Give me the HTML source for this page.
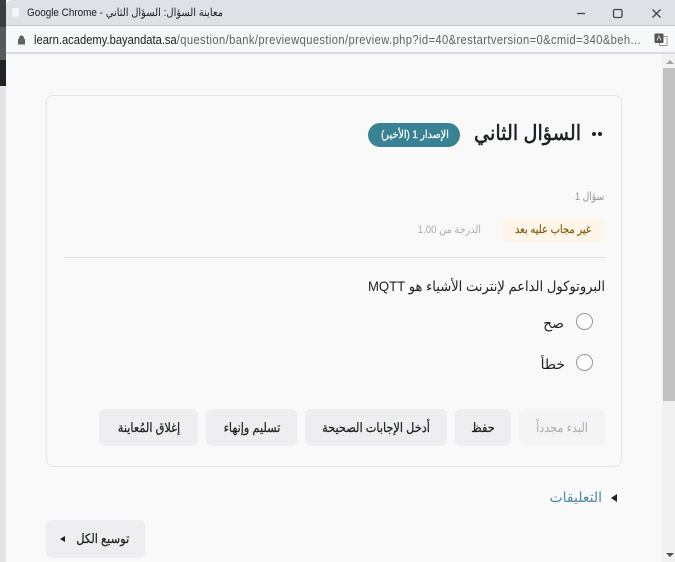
<!DOCTYPE html>
<html lang="ar"><head><meta charset="utf-8">
<style>
html,body{margin:0;padding:0;width:675px;height:562px;overflow:hidden;background:#f9f9fa;font-family:"Liberation Sans","Noto Sans CJK SC",sans-serif;}
.a{position:absolute;white-space:nowrap;}
.r{direction:rtl;}
.btn{position:absolute;top:409px;height:37px;background:#eeeef0;border-radius:6px;font-size:13px;color:#1d2125;direction:rtl;white-space:nowrap;}
.btn span{position:absolute;left:50%;top:0;line-height:37px;-webkit-text-stroke:.25px #1d2125;transform:translateX(-50%) scaleX(.87);}
.radio{position:absolute;width:15px;height:15px;border:1px solid #969696;border-radius:50%;background:#fff;}
</style></head>
<body>
<div class="a" style="left:0;top:0;width:6px;height:27px;background:#3b3d40"></div>
<div class="a" style="left:0;top:27px;width:6px;height:33px;background:#58595b"></div>
<div class="a" style="left:0;top:60px;width:6px;height:26px;background:#1f2326"></div>
<div class="a" style="left:0;top:86px;width:6px;height:476px;background:#e4e4e6"></div>
<div class="a" style="left:6px;top:0;width:669px;height:26px;background:#dee1e6;border-top-left-radius:6px"></div>
<div class="a" style="left:6px;top:25px;width:669px;height:1px;background:#c4c6ca"></div>
<div class="a" style="left:6px;top:26px;width:669px;height:26px;background:#f7f8f9"></div>
<div class="a" style="left:6px;top:52px;width:669px;height:2px;background:#dadce0"></div>
<div class="a" style="left:12px;top:8px;width:7px;height:9px;background:#f5f6f8;border-radius:2px"></div>
<div class="a" style="left:27px;top:6px;font-size:11px;line-height:15px;color:#202124;direction:ltr;transform:scaleX(.9);transform-origin:left top">Google Chrome - <span dir="rtl">معاينة السؤال: السؤال الثاني</span></div>
<svg class="a" style="left:570px;top:4px" width="100" height="18" viewBox="0 0 100 18" fill="none" stroke="#444" stroke-width="1.300"><path d="M7 9.500h8"/><rect x="43.500" y="5.500" width="8.500" height="8" rx="1.500"/><path d="M82.500 5.500l8 8M90.500 5.500l-8 8"/></svg>
<svg class="a" style="left:17px;top:35px" width="9" height="10" viewBox="0 0 9 10"><path d="M2 4V3a2.500 2.500 0 0 1 5 0v1h1v5.500H1V4z" fill="#5f6368"/></svg>
<div class="a" style="left:34px;top:31px;font-size:13px;line-height:18px;color:#5f6368;transform:scaleX(.86);transform-origin:left top"><span style="color:#202124">learn.academy.bayandata.sa</span><span style="letter-spacing:.45px">/question/bank/previewquestion/preview.php?id=40&amp;restartversion=0&amp;cmid=340&amp;beh...</span></div>
<div class="a" style="left:646px;top:28px;width:16px;height:22px;background:#f7f8f9"></div>
<svg class="a" style="left:654px;top:33px" width="14" height="14" viewBox="0 0 14 14"><rect x="5.500" y="3.500" width="7.500" height="9" fill="#fff" stroke="#999"/><rect x="0.500" y="0.500" width="9" height="9.500" rx="1" fill="#555"/><path d="M3 7.500l2-4.500 2 4.500" fill="none" stroke="#ccc"/></svg>

<div class="a" style="left:662px;top:54px;width:13px;height:508px;background:#f1f1f1"></div>
<div class="a" style="left:663px;top:68px;width:12px;height:333px;background:#c1c1c1"></div>
<div class="a" style="left:666px;top:60px;width:0;height:0;border-left:4px solid transparent;border-right:4px solid transparent;border-bottom:4px solid #a3a3a3"></div>
<div class="a" style="left:666px;top:553px;width:0;height:0;border-left:4px solid transparent;border-right:4px solid transparent;border-top:4px solid #505050"></div>

<div class="a" style="left:46px;top:95px;width:574px;height:370px;border:1px solid #e6e6e8;border-radius:7px"></div>

<div class="a" style="left:592px;top:132px;width:4px;height:4px;border-radius:50%;background:#1d2125"></div>
<div class="a" style="left:598px;top:132px;width:4px;height:4px;border-radius:50%;background:#1d2125"></div>
<div class="a r" style="right:94px;top:120px;font-size:21px;line-height:28px;-webkit-text-stroke:.55px #1d2125;color:#1d2125;transform:scaleX(.915);transform-origin:right top">السؤال الثاني</div>
<div class="a" style="left:368px;top:123px;width:92px;height:24px;border-radius:12px;background:#398294"></div>
<div class="a r" style="left:414.500px;top:123px;color:#fff;font-size:11px;-webkit-text-stroke:.25px #fff;line-height:24px;transform:translateX(-50%) scaleX(.87)">الإصدار 1 (الأخير)</div>
<div class="a r" style="right:71px;top:189px;font-size:11px;line-height:16px;color:#8f959e;transform:scaleX(.83);transform-origin:right top">سؤال 1</div>
<div class="a" style="left:501px;top:218px;width:103px;height:24px;border-radius:6px;background:#fdf6e9"></div>
<div class="a r" style="left:553px;top:218px;color:#8c5a10;font-size:11.500px;-webkit-text-stroke:.2px #8c5a10;line-height:24px;transform:translateX(-50%) scaleX(.86)">غير مجاب عليه بعد</div>
<div class="a r" style="right:194px;top:222px;font-size:11px;line-height:16px;color:#a9acb2;transform:scaleX(.88);transform-origin:right top">الدرجة من 1.00</div>
<div class="a" style="left:64px;top:257px;width:541px;height:1px;background:#e4e4e6"></div>
<div class="a r" style="right:70px;top:276px;font-size:14px;line-height:20px;color:#1d2125;transform:scaleX(.937);transform-origin:right top">البروتوكول الداعم لإنترنت الأشياء هو MQTT</div>
<div class="radio" style="left:576px;top:313px"></div>
<div class="a r" style="right:111px;top:313px;font-size:14px;line-height:20px;color:#1d2125">صح</div>
<div class="radio" style="left:576px;top:354px"></div>
<div class="a r" style="right:110px;top:354px;font-size:14px;line-height:20px;color:#1d2125">خطأ</div>

<div class="btn" style="left:519px;width:86px;background:#f4f4f5;color:#a9acb2"><span style="-webkit-text-stroke:0">البدء مجدداً</span></div>
<div class="btn" style="left:455px;width:56px"><span>حفظ</span></div>
<div class="btn" style="left:305px;width:142px"><span>أدخل الإجابات الصحيحة</span></div>
<div class="btn" style="left:206px;width:91px"><span>تسليم وإنهاء</span></div>
<div class="btn" style="left:99px;width:99px"><span>إغلاق المُعاينة</span></div>

<div class="a" style="left:611px;top:494px;width:0;height:0;border-top:4px solid transparent;border-bottom:4px solid transparent;border-right:6px solid #1d2125"></div>
<div class="a r" style="right:73px;top:487px;font-size:14px;line-height:20px;color:#4f8a9c">التعليقات</div>

<div class="a" style="left:46px;top:520px;width:99px;height:38px;background:#eeeef0;border-radius:6px"></div>
<div class="a r" style="right:546px;top:530px;font-size:13px;line-height:18px;-webkit-text-stroke:.25px #1d2125;color:#1d2125;transform:scaleX(.88);transform-origin:right top">توسيع الكل</div>
<div class="a" style="left:60px;top:536px;width:0;height:0;border-top:3.500px solid transparent;border-bottom:3.500px solid transparent;border-right:5px solid #1d2125"></div>
</body></html>
